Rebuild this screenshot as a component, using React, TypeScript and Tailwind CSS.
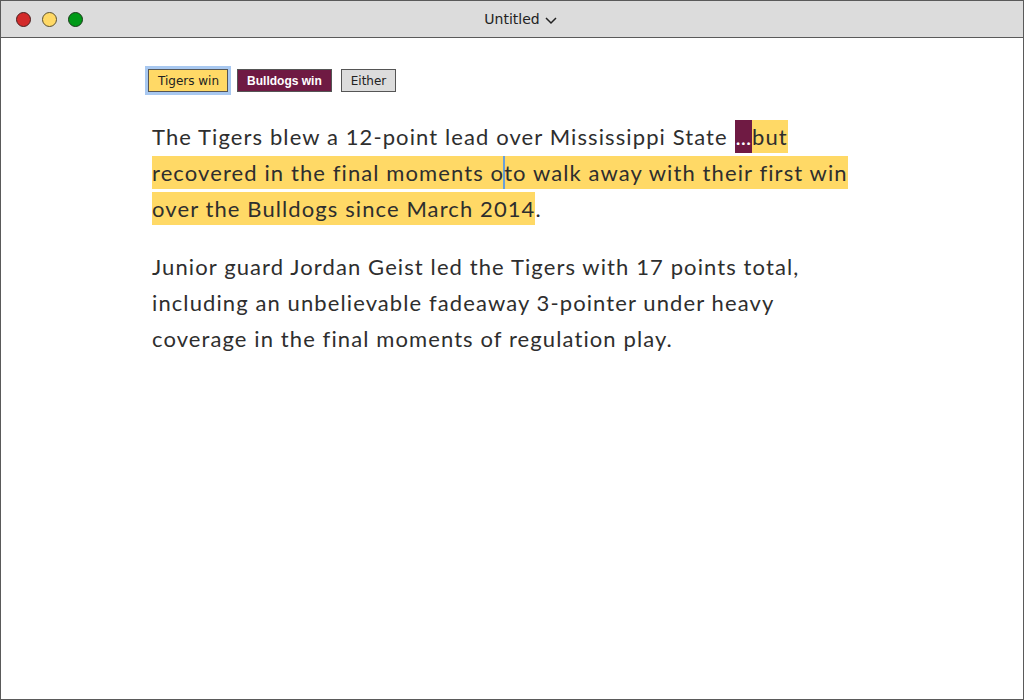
import React from "react";

const Hl = ({ children, className = "" }: { children: React.ReactNode; className?: string }) => (
  <span className={`inline-block h-[33px] leading-[33px] bg-[#ffd966] ${className}`}>{children}</span>
);

export default function App() {
  return (
    <div className="w-[1024px] h-[700px] border border-[#5a5a5a] bg-white flex flex-col overflow-hidden">
      <div className="h-[37px] shrink-0 bg-[#dcdcdc] border-b border-[#5a5a5a] relative flex items-center">
        <div className="flex items-center gap-[11px] pl-[15px]">
          <span className="w-[15px] h-[15px] rounded-full bg-[#d32b2b] border border-[#4a2020]" />
          <span className="w-[15px] h-[15px] rounded-full bg-[#ffd966] border border-[#5a5030]" />
          <span className="w-[15px] h-[15px] rounded-full bg-[#009a17] border border-[#1a3a1a]" />
        </div>
        <div className="absolute left-0 right-0 top-0 h-full flex items-center justify-center pointer-events-none">
          <span className="text-[14px] text-[#222] pl-[18px]" style={{ fontFamily: '"DejaVu Sans", sans-serif' }}>
            Untitled
          </span>
          <svg width="14" height="10" viewBox="0 0 14 10" className="ml-[4px] mt-[2px]">
            <path d="M2 3 L7 8 L12 3" fill="none" stroke="#222" strokeWidth="1.5" />
          </svg>
        </div>
      </div>
      <div className="flex-1 pl-[151px] pt-[31px]">
        <div className="flex items-center gap-[9px] text-[12px] -ml-[4px]" style={{ fontFamily: '"DejaVu Sans", sans-serif' }}>
          <button className="h-[23px] pl-[9px] pr-[8px] bg-[#ffd966] border border-[#555] text-[#222] outline-[3px] outline-solid outline-[#a8c8f0]">
            Tigers win
          </button>
          <button
            className="h-[23px] px-[9px] bg-[#6f1a43] border border-[#555] text-white font-bold"
            style={{ fontFamily: '"Liberation Sans", sans-serif' }}
          >
            Bulldogs win
          </button>
          <button className="h-[23px] px-[9px] bg-[#dcdcdc] border border-[#555] text-[#222]">Either</button>
        </div>
        <div
          className="mt-[27px] text-[22px] leading-[36px] tracking-[1.1px] text-[#2e2e2e] whitespace-nowrap"
          style={{ fontFamily: 'Lato, sans-serif' }}
        >
          <div>
            The Tigers blew a 12-point lead over Mississippi State{" "}
            <span className="inline-block h-[33px] leading-[33px] bg-[#6f1a43] text-white tracking-[0px] px-[1px]">...</span>
            <Hl>but</Hl>
          </div>
          <div>
            <Hl>
              recovered in the final moments o
              <span className="inline-block align-top w-[2px] h-[33px] bg-[#6a9fd8] -mx-[1px]" />
              to walk away with their first win
            </Hl>
          </div>
          <div>
            <Hl>over the Bulldogs since March 2014</Hl>.
          </div>
          <div className="mt-[22px]">Junior guard Jordan Geist led the Tigers with 17 points total,</div>
          <div>including an unbelievable fadeaway 3-pointer under heavy</div>
          <div>coverage in the final moments of regulation play.</div>
        </div>
      </div>
    </div>
  );
}
